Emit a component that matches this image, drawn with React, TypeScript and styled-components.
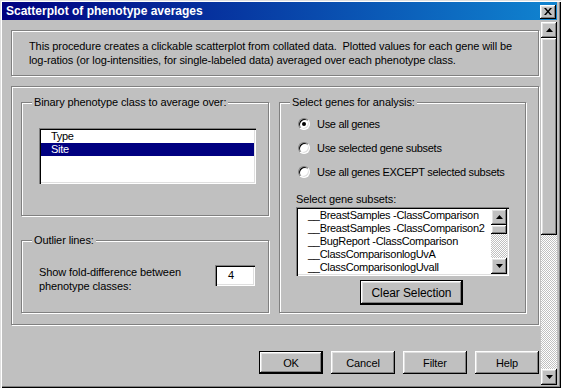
import React from 'react'
import styled, { createGlobalStyle, css } from 'styled-components'

const GlobalStyle = createGlobalStyle`
  html, body {
    margin: 0;
    padding: 0;
    background: #c0c0c0;
  }
  body {
    font-family: "Liberation Sans", Arial, sans-serif;
    font-size: 11px;
    letter-spacing: -0.1px;
    color: #000;
  }
`

const raised = css`
  background: #c0c0c0;
  box-shadow: inset -1px -1px #000, inset 1px 1px #fff, inset -2px -2px #808080,
    inset 2px 2px #dfdfdf;
`

const etched = css`
  box-sizing: border-box;
  border: 1px solid #808080;
  box-shadow: inset 1px 1px #fff, 1px 1px #fff;
`

const sunken = css`
  box-sizing: border-box;
  background: #fff;
  box-shadow: inset 1px 1px #808080, inset 2px 2px #000, inset -1px -1px #fff,
    inset -2px -2px #dfdfdf;
`

const checker = css`
  background-color: #c0c0c0;
  background-image: repeating-conic-gradient(#fff 0 25%, #c0c0c0 0 50%);
  background-size: 2px 2px;
`

const Window = styled.div`
  box-sizing: border-box;
  width: 561px;
  height: 388px;
  padding: 2px 4px 3px 2px;
  background: #c0c0c0;
  box-shadow: inset 1px 1px #dfdfdf, inset 2px 2px #fff, inset -1px -1px #000,
    inset -2px -2px #808080;
  display: flex;
  flex-direction: column;
`

const TitleBar = styled.div`
  height: 18px;
  margin-bottom: 1px;
  padding-left: 4px;
  display: flex;
  align-items: center;
  justify-content: space-between;
  background: linear-gradient(90deg, #000080, #1084d0);
  color: #fff;
  font-weight: bold;
  font-size: 12px;
  letter-spacing: 0;
`

const CloseBtn = styled.div`
  ${raised};
  width: 16px;
  height: 14px;
  margin: 1px 1px 0 0;
  display: flex;
  align-items: center;
  justify-content: center;
`

const Body = styled.div`
  flex: 1;
  display: flex;
`

const Client = styled.div`
  flex: 1;
  padding: 9px 0 0 9px;
  display: flex;
  flex-direction: column;
`

const VScroll = styled.div`
  width: 16px;
  margin-top: 1px;
  display: flex;
  flex-direction: column;
`

const ArrowBtn = styled.div`
  ${raised};
  width: 16px;
  height: 16px;
  flex: none;
  display: flex;
  align-items: center;
  justify-content: center;
`

const Thumb = styled.div<{ $h: number }>`
  ${raised};
  height: ${(p) => p.$h}px;
  flex: none;
`

const Track = styled.div`
  ${checker};
  flex: 1;
`

const InfoBox = styled.div`
  ${etched};
  width: 528px;
  height: 46px;
  padding: 8px 0 0 17px;
  line-height: 14px;
  white-space: nowrap;
`

const Panel = styled.div`
  ${etched};
  width: 528px;
  height: 239px;
  margin-top: 10px;
  padding: 15px 0 0 9px;
  display: flex;
  align-items: flex-start;
  gap: 10px;
`

const LeftCol = styled.div`
  width: 248px;
  display: flex;
  flex-direction: column;
`

const Group = styled.div<{ $w: number; $h: number; $top?: number }>`
  ${etched};
  width: ${(p) => p.$w}px;
  height: ${(p) => p.$h}px;
  margin-top: ${(p) => p.$top ?? 0}px;
  display: flex;
  flex-direction: column;
  align-items: flex-start;
`

const GroupLabel = styled.div`
  margin: -7px 0 0 10px;
  padding: 0 2px;
  line-height: 13px;
  background: #c0c0c0;
  white-space: nowrap;
`

const ListBox = styled.div<{ $w: number; $h: number; $top: number; $left: number }>`
  ${sunken};
  width: ${(p) => p.$w}px;
  height: ${(p) => p.$h}px;
  margin: ${(p) => p.$top}px 0 0 ${(p) => p.$left}px;
  padding: 2px;
  display: flex;
`

const Items = styled.div`
  flex: 1;
  min-width: 0;
  display: flex;
  flex-direction: column;
  overflow: hidden;
`

const Item = styled.div<{ $selected?: boolean }>`
  height: 13px;
  line-height: 13px;
  padding-left: 10px;
  white-space: nowrap;
  letter-spacing: -0.3px;
  background: ${(p) => (p.$selected ? '#000080' : 'transparent')};
  color: ${(p) => (p.$selected ? '#fff' : '#000')};
`

const ListScroll = styled.div`
  width: 16px;
  flex: none;
  display: flex;
  flex-direction: column;
`

const FoldRow = styled.div`
  align-self: stretch;
  margin: 18px 13px 0 17px;
  display: flex;
  justify-content: space-between;
  align-items: flex-start;
  line-height: 14px;
`

const NumberBox = styled.div`
  ${sunken};
  width: 40px;
  height: 21px;
  padding-left: 13px;
  line-height: 21px;
`

const RadioList = styled.div`
  margin-top: 8px;
  padding-left: 18px;
  display: flex;
  flex-direction: column;
  gap: 10px;
`

const RadioRow = styled.div`
  height: 14px;
  display: flex;
  align-items: center;
  white-space: nowrap;
  letter-spacing: -0.3px;
`

const RadioDot = styled.span<{ $checked?: boolean }>`
  box-sizing: border-box;
  width: 12px;
  height: 12px;
  margin-right: 7px;
  border-radius: 50%;
  background: #fff;
  border: 1px solid;
  border-color: #808080 #fff #fff #808080;
  box-shadow: inset 1px 1px #000, inset -1px -1px #dfdfdf;
  display: flex;
  align-items: center;
  justify-content: center;
  &::after {
    content: '';
    width: 4px;
    height: 4px;
    border-radius: 50%;
    background: ${(p) => (p.$checked ? '#000' : 'transparent')};
  }
`

const SubsetLabel = styled.div`
  margin-top: 13px;
  padding-left: 16px;
  line-height: 14px;
`

const Button = styled.div<{ $w: number; $h: number; $default?: boolean }>`
  ${raised};
  box-sizing: border-box;
  width: ${(p) => p.$w}px;
  height: ${(p) => p.$h}px;
  display: flex;
  align-items: center;
  justify-content: center;
  ${(p) =>
    p.$default &&
    css`
      border: 1px solid #000;
    `}
`

const ClearButton = styled(Button)`
  margin: 4px 0 0 80px;
  font-size: 12px;
`

const ButtonRow = styled.div`
  width: 528px;
  margin-top: 26px;
  display: flex;
  justify-content: flex-end;
  gap: 8px;
`

function Arrow({ dir }: { dir: 'up' | 'down' }) {
  return (
    <svg width="7" height="4" viewBox="0 0 7 4">
      <path d={dir === 'up' ? 'M3.5 0 L7 4 L0 4 Z' : 'M0 0 L7 0 L3.5 4 Z'} fill="#000" />
    </svg>
  )
}

const subsets = [
  '__BreastSamples -ClassComparison',
  '__BreastSamples -ClassComparison2',
  '__BugReport -ClassComparison',
  '__ClassComparisonlogUvA',
  '__ClassComparisonlogUvall',
]

export default function App() {
  return (
    <>
      <GlobalStyle />
      <Window>
        <TitleBar>
          <span>Scatterplot of phenotype averages</span>
          <CloseBtn>
            <svg width="8" height="7" viewBox="0 0 8 7">
              <path d="M0 0h2l2 2.5L6 0h2L5 3.5 8 7H6L4 4.5 2 7H0l3-3.5z" fill="#000" />
            </svg>
          </CloseBtn>
        </TitleBar>
        <Body>
          <Client>
            <InfoBox>
              This procedure creates a clickable scatterplot from collated data.&nbsp; Plotted
              values for each gene will be
              <br />
              log-ratios (or log-intensities, for single-labeled data) averaged over each
              phenotype class.
            </InfoBox>
            <Panel>
              <LeftCol>
                <Group $w={248} $h={114}>
                  <GroupLabel>Binary phenotype class to average over:</GroupLabel>
                  <ListBox $w={217} $h={56} $top={19} $left={17}>
                    <Items>
                      <Item>Type</Item>
                      <Item $selected>Site</Item>
                    </Items>
                  </ListBox>
                </Group>
                <Group $w={248} $h={73} $top={24}>
                  <GroupLabel>Outlier lines:</GroupLabel>
                  <FoldRow>
                    <span>
                      Show fold-difference between
                      <br />
                      phenotype classes:
                    </span>
                    <NumberBox>4</NumberBox>
                  </FoldRow>
                </Group>
              </LeftCol>
              <Group $w={247} $h={211}>
                <GroupLabel>Select genes for analysis:</GroupLabel>
                <RadioList>
                  <RadioRow>
                    <RadioDot $checked />
                    Use all genes
                  </RadioRow>
                  <RadioRow>
                    <RadioDot />
                    Use selected gene subsets
                  </RadioRow>
                  <RadioRow>
                    <RadioDot />
                    Use all genes EXCEPT selected subsets
                  </RadioRow>
                </RadioList>
                <SubsetLabel>Select gene subsets:</SubsetLabel>
                <ListBox $w={213} $h={69} $top={1} $left={16}>
                  <Items>
                    {subsets.map((s) => (
                      <Item key={s}>{s}</Item>
                    ))}
                  </Items>
                  <ListScroll>
                    <ArrowBtn>
                      <Arrow dir="up" />
                    </ArrowBtn>
                    <Thumb $h={9} />
                    <Track />
                    <ArrowBtn>
                      <Arrow dir="down" />
                    </ArrowBtn>
                  </ListScroll>
                </ListBox>
                <ClearButton $w={103} $h={25} $default>
                  Clear Selection
                </ClearButton>
              </Group>
            </Panel>
            <ButtonRow>
              <Button $w={64} $h={23} $default>
                OK
              </Button>
              <Button $w={64} $h={23}>
                Cancel
              </Button>
              <Button $w={64} $h={23}>
                Filter
              </Button>
              <Button $w={64} $h={23}>
                Help
              </Button>
            </ButtonRow>
          </Client>
          <VScroll>
            <ArrowBtn>
              <Arrow dir="up" />
            </ArrowBtn>
            <Thumb $h={197} />
            <Track />
            <ArrowBtn>
              <Arrow dir="down" />
            </ArrowBtn>
          </VScroll>
        </Body>
      </Window>
    </>
  )
}
